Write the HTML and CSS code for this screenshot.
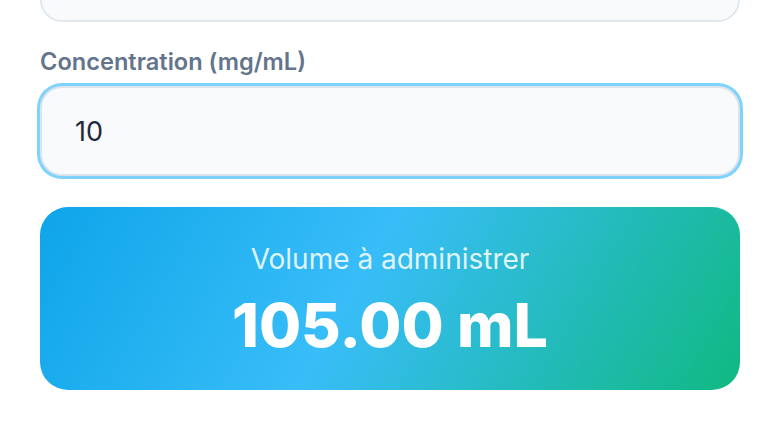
FILE: index.html
```html
<!DOCTYPE html>
<html>
<head>
    <title>Calcul de dose</title>
    <link rel="stylesheet" href="styles.css">
</head>
<body>
    <div class="container">
        <!-- Champ précédent (poids) -->
        <div class="field">
            <input type="text" class="input" value="">
        </div>

        <!-- Concentration -->
        <div class="field">
            <label class="label" for="concentration">Concentration (mg/mL)</label>
            <input type="text" id="concentration" class="input input-focus" value="10">
        </div>

        <!-- Résultat -->
        <div class="result">
            <div class="result-title">Volume à administrer</div>
            <div class="result-value">105.00 mL</div>
        </div>
    </div>
</body>
</html>
```

FILE: styles.css
```css
body { margin: 0; background: #ffffff; font-family: Inter, "Noto Sans", sans-serif; }
.container { width: 700px; margin: -68px auto 0; }
.field { display: flex; flex-direction: column; margin-bottom: 26px; }
.label { font-size: 23.6px; font-weight: 600; color: #64748b; margin-top: -2px; margin-bottom: 8px; line-height: 32px; }
.input { box-sizing: border-box; height: 90px; width: 100%; padding: 0 33px; font-family: Inter, sans-serif; font-size: 27px; color: #1e293b; background: #f8fafc; border: 2px solid #e2e8f0; border-radius: 22px; outline: none; }
.input-focus { border: 2px solid #dde3ea; box-shadow: 0 0 0 3px #7dd3fc; }
.result { box-sizing: border-box; margin-top: 31px; height: 183px; padding-top: 5px; border-radius: 28px; background: linear-gradient(120deg, #0ea5e9 0%, #38bdf8 45%, #10b981 100%); color: #ffffff; display: flex; flex-direction: column; align-items: center; justify-content: center; }
.result-title { font-size: 28px; font-weight: 400; color: rgba(255, 255, 255, 0.85); line-height: 34px; }
.result-value { font-size: 61px; font-weight: 800; line-height: 72px; margin-top: 13px; }
```
